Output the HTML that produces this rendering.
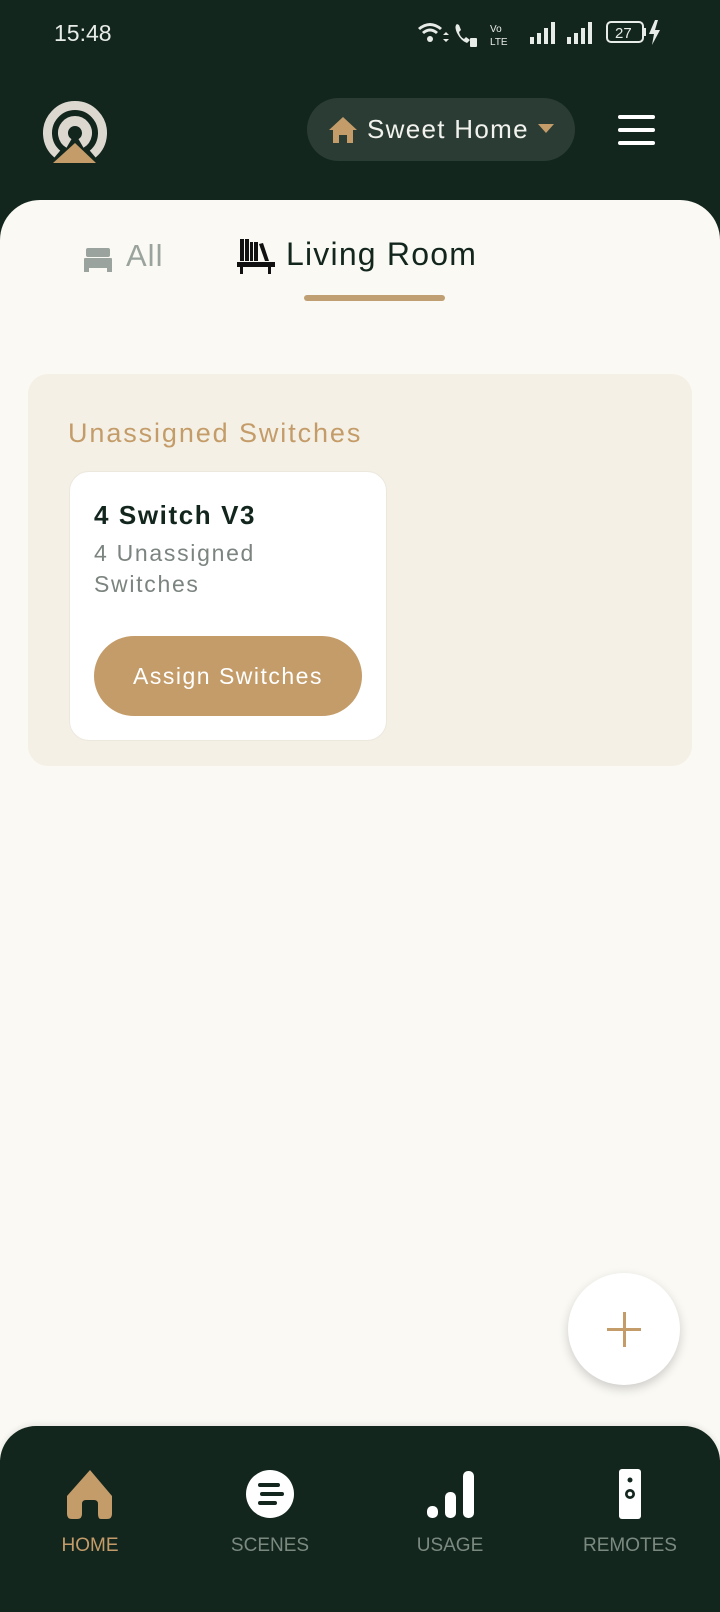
<!DOCTYPE html>
<html><head><meta charset="utf-8">
<style>
*{margin:0;padding:0;box-sizing:border-box}
html,body{width:720px;height:1612px;overflow:hidden}
body{background:#13261e;font-family:"Liberation Sans",sans-serif;position:relative}
.abs{position:absolute}
.sheet{position:absolute;left:0;top:200px;width:720px;height:1260px;background:#faf9f4;border-radius:40px 40px 0 0}
.nav{position:absolute;left:0;top:1426px;width:720px;height:186px;background:#13261e;border-radius:36px 36px 0 0;box-shadow:0 -2px 6px rgba(0,0,0,.08)}
.lbl{position:absolute;top:1535px;font-size:19px;width:160px;text-align:center;color:#7b8a80}
</style></head><body>
<!-- status bar -->
<div class="abs" style="left:54px;top:20px;color:#e8ece9;font-size:23px">15:48</div>
<svg class="abs" style="left:415px;top:18px" width="260" height="30" viewBox="0 0 260 30">
 <g fill="#e8ece9">
  <path d="M3 10 Q15 0 27 10 L25 12 Q15 4 5 12Z"/><path d="M7 14 Q15 7 23 14 L21 16 Q15 11 9 16Z"/><circle cx="15" cy="21" r="3"/>
  <path d="M28 17l3-3 3 3zM28 21l3 3 3-3z"/>
  <path d="M42 6 q-3 2 0 9 q4 8 10 10 l3-3 -4-3 -2 2 q-4-2 -5-7 l2-2 -2-5z"/>
  <rect x="55" y="20" width="7" height="9" rx="1"/>
  <text x="75" y="14" font-size="10" font-family="Liberation Sans">Vo</text><text x="75" y="27" font-size="10" font-family="Liberation Sans">LTE</text>
  <rect x="115" y="19" width="4" height="7"/><rect x="122" y="15" width="4" height="11"/><rect x="129" y="10" width="4" height="16"/><rect x="136" y="4" width="4" height="22"/>
  <rect x="152" y="19" width="4" height="7"/><rect x="159" y="15" width="4" height="11"/><rect x="166" y="10" width="4" height="16"/><rect x="173" y="4" width="4" height="22"/>
  <rect x="192" y="4" width="36" height="20" rx="4" fill="none" stroke="#e8ece9" stroke-width="2"/><rect x="229" y="10" width="2" height="8"/>
  <text x="200" y="20" font-size="15" font-family="Liberation Sans">27</text>
  <path d="M240 2 l-6 14 h5 l-2 11 8-15 h-5 l3-10z"/>
 </g></svg>
<!-- logo -->
<svg class="abs" style="left:38px;top:96px" width="74" height="72" viewBox="0 0 74 72">
 <g fill="none" stroke="#dcd8cf">
  <path d="M19.3 58.1 A27.5 27.5 0 1 1 54.7 58.1" stroke-width="9"/>
  <path d="M31 47.4 A12 12 0 1 1 43 47.4" stroke-width="10"/>
 </g>
 <path d="M37 47 L58 67 H15Z" fill="#c49c69"/>
</svg>
<!-- pill -->
<div class="abs" style="left:307px;top:98px;width:268px;height:63px;border-radius:32px;background:#2a3c33"></div>
<svg class="abs" style="left:328px;top:116px" width="30" height="28" viewBox="0 0 30 28"><path d="M15 1 L29 14 H25 V27 H19 V19 H11 V27 H5 V14 H1Z" fill="#c49c69"/></svg>
<div class="abs" style="left:367px;top:114px;color:#f2f2ee;font-size:26px;letter-spacing:1.3px">Sweet Home</div>
<svg class="abs" style="left:538px;top:124px" width="16" height="10"><path d="M0 0H16L8 9Z" fill="#c49c69"/></svg>
<!-- hamburger -->
<div class="abs" style="left:618px;top:115px;width:37px;height:4px;border-radius:2px;background:#fff"></div>
<div class="abs" style="left:618px;top:128px;width:37px;height:4px;border-radius:2px;background:#fff"></div>
<div class="abs" style="left:618px;top:141px;width:37px;height:4px;border-radius:2px;background:#fff"></div>

<div class="sheet"></div>
<!-- tabs -->
<svg class="abs" style="left:84px;top:248px" width="28" height="24" viewBox="0 0 28 24"><g fill="#9aa39d"><rect x="2" y="0" width="24" height="9" rx="2"/><rect x="0" y="10" width="28" height="10" rx="1"/><rect x="0" y="19" width="5" height="5"/><rect x="23" y="19" width="5" height="5"/></g></svg>
<div class="abs" style="left:126px;top:238px;font-size:31px;color:#9aa39d;letter-spacing:1px">All</div>
<svg class="abs" style="left:237px;top:238px" width="38" height="38" viewBox="0 0 38 38"><g fill="#111"><rect x="3" y="1" width="4" height="22"/><rect x="8" y="1" width="4" height="22"/><rect x="13" y="4" width="3" height="19"/><rect x="17" y="4" width="4" height="19"/><path d="M22 6 l4-1 6 18 -4 0z"/><rect x="0" y="24" width="38" height="5"/><rect x="3" y="29" width="3" height="7"/><rect x="31" y="29" width="3" height="7"/></g></svg>
<div class="abs" style="left:286px;top:236px;font-size:32px;color:#13261e;letter-spacing:1.2px">Living Room</div>
<div class="abs" style="left:304px;top:295px;width:141px;height:6px;border-radius:3px;background:#c0a072"></div>

<!-- panel -->
<div class="abs" style="left:28px;top:374px;width:664px;height:392px;border-radius:20px;background:#f4f0e5"></div>
<div class="abs" style="left:68px;top:418px;font-size:27px;color:#c49c69;letter-spacing:1.9px">Unassigned Switches</div>
<div class="abs" style="left:69px;top:471px;width:318px;height:270px;border-radius:20px;background:#fff;border:1px solid #ece8de"></div>
<div class="abs" style="left:94px;top:500px;font-size:26px;color:#13261e;letter-spacing:1.6px;font-weight:bold">4 Switch V3</div>
<div class="abs" style="left:94px;top:538px;font-size:23px;line-height:31px;color:#7b847f;letter-spacing:1.7px">4 Unassigned<br>Switches</div>
<div class="abs" style="left:94px;top:636px;width:268px;height:80px;border-radius:40px;background:#c49c69;color:#fff;font-size:23px;text-align:center;line-height:80px;letter-spacing:1.5px">Assign Switches</div>

<!-- FAB -->
<div class="abs" style="left:568px;top:1273px;width:112px;height:112px;border-radius:50%;background:#fff;box-shadow:0 4px 10px rgba(0,0,0,.18)"></div>
<div class="abs" style="left:607px;top:1328px;width:34px;height:3px;background:#c49c69"></div>
<div class="abs" style="left:623px;top:1312px;width:3px;height:35px;background:#c49c69"></div>

<!-- nav -->
<div class="nav"></div>
<svg class="abs" style="left:67px;top:1470px" width="46" height="50" viewBox="0 0 46 50"><path d="M23 0 L45 26 V44 Q45 49 40 49 H34 Q31 49 31 44 V34 Q31 30 27 30 H19 Q15 30 15 34 V44 Q15 49 10 49 H5 Q0 49 0 44 V26Z" fill="#c49c69"/></svg>
<svg class="abs" style="left:246px;top:1470px" width="48" height="48" viewBox="0 0 48 48"><circle cx="24" cy="24" r="24" fill="#fff"/><g stroke="#13261e" stroke-width="4" stroke-linecap="round"><path d="M14 15H32M16 24H36M14 33H29"/></g></svg>
<svg class="abs" style="left:427px;top:1470px" width="48" height="48" viewBox="0 0 48 48"><g fill="#fff"><rect x="0" y="36" width="11" height="12" rx="5"/><rect x="18" y="22" width="11" height="26" rx="5"/><rect x="36" y="1" width="11" height="47" rx="5"/></g></svg>
<svg class="abs" style="left:619px;top:1469px" width="22" height="50" viewBox="0 0 22 50"><rect x="0" y="0" width="22" height="50" rx="3" fill="#fff"/><circle cx="11" cy="11" r="2.5" fill="#13261e"/><circle cx="11" cy="25" r="5" fill="#13261e"/><circle cx="11" cy="25" r="2.3" fill="#fff"/></svg>
<div class="lbl" style="left:10px;color:#c49c69">HOME</div>
<div class="lbl" style="left:190px">SCENES</div>
<div class="lbl" style="left:370px">USAGE</div>
<div class="lbl" style="left:550px">REMOTES</div>
</body></html>
